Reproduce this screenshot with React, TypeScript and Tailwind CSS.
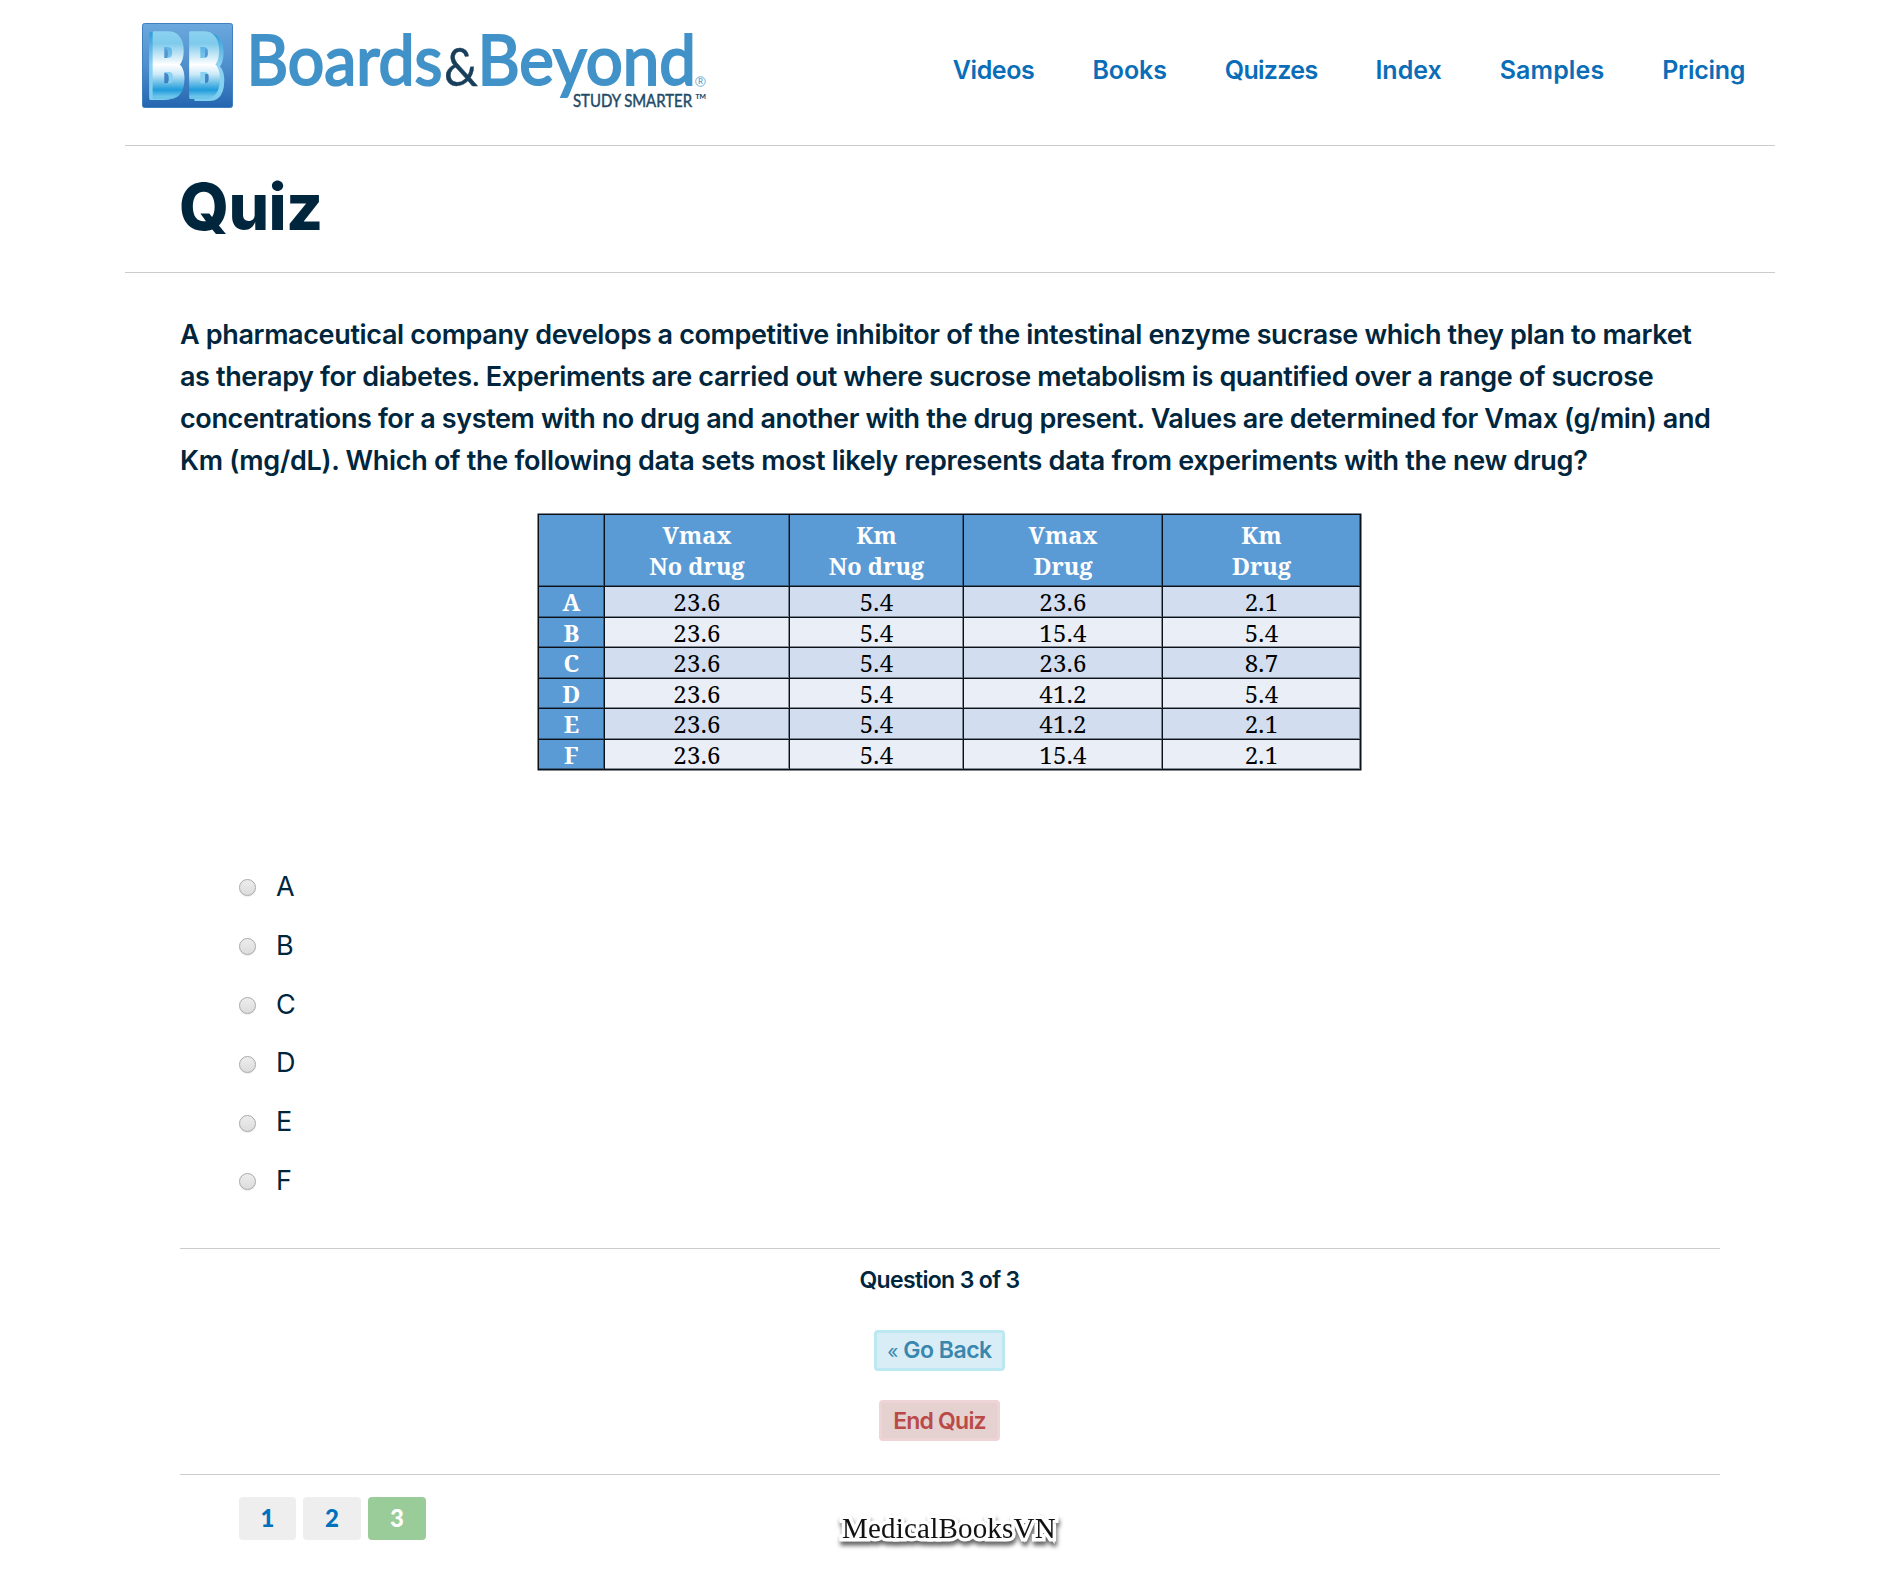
const NAV = [
  { label: "Videos", cls: "tracking-[-0.4px]" },
  { label: "Books", cls: "tracking-[-0.1px]" },
  { label: "Quizzes", cls: "tracking-[-0.7px]" },
  { label: "Index", cls: "tracking-[0px]" },
  { label: "Samples", cls: "tracking-[0.1px]" },
  { label: "Pricing", cls: "tracking-[-0.3px]" },
];

const QUESTION = [
  { text: "A pharmaceutical company develops a competitive inhibitor of the intestinal enzyme sucrase which they plan to market", cls: "tracking-[-0.36px]" },
  { text: "as therapy for diabetes. Experiments are carried out where sucrose metabolism is quantified over a range of sucrose", cls: "tracking-[-0.38px]" },
  { text: "concentrations for a system with no drug and another with the drug present. Values are determined for Vmax (g/min) and", cls: "tracking-[-0.38px]" },
  { text: "Km (mg/dL). Which of the following data sets most likely represents data from experiments with the new drug?", cls: "tracking-[-0.29px]" },
];

const HEAD = [
  ["Vmax", "No drug"],
  ["Km", "No drug"],
  ["Vmax", "Drug"],
  ["Km", "Drug"],
];

const ROWS = [
  ["A", "23.6", "5.4", "23.6", "2.1"],
  ["B", "23.6", "5.4", "15.4", "5.4"],
  ["C", "23.6", "5.4", "23.6", "8.7"],
  ["D", "23.6", "5.4", "41.2", "5.4"],
  ["E", "23.6", "5.4", "41.2", "2.1"],
  ["F", "23.6", "5.4", "15.4", "2.1"],
];

function Logo() {
  return (
    <svg width="572" height="96" viewBox="140 20 572 96" className="block" role="img" aria-label="Boards & Beyond">
      <defs>
        <linearGradient id="tile" x1="0" y1="0" x2="0" y2="1">
          <stop offset="0" stopColor="#6ba8dd" />
          <stop offset="0.5" stopColor="#4f8fcd" />
          <stop offset="1" stopColor="#2465b0" />
        </linearGradient>
        <linearGradient id="face" gradientUnits="userSpaceOnUse" x1="0" y1="-66" x2="0" y2="0">
          <stop offset="0" stopColor="#8bd3ef" />
          <stop offset="0.2" stopColor="#7fcaec" />
          <stop offset="0.52" stopColor="#ffffff" />
          <stop offset="0.66" stopColor="#cdeaf8" />
          <stop offset="0.9" stopColor="#1f9cdb" />
          <stop offset="1" stopColor="#6cc4ea" />
        </linearGradient>
        <linearGradient id="side" gradientUnits="userSpaceOnUse" x1="0" y1="-66" x2="0" y2="0">
          <stop offset="0" stopColor="#2c9bd8" />
          <stop offset="0.5" stopColor="#8fd3f2" />
          <stop offset="1" stopColor="#7ccdf0" />
        </linearGradient>
      </defs>
      <rect x="142.5" y="23.5" width="90" height="84" rx="2" fill="url(#tile)" stroke="#3f7fc2" strokeWidth="1" />
      <g fontFamily="Roboto, sans-serif" fontWeight="900" fontSize="89" strokeLinejoin="round">
        <g fill="url(#side)" stroke="url(#side)" strokeWidth="4">
          <text transform="translate(147.5 97.5) scale(0.58 1)">B</text>
          <text transform="translate(192.5 98.5) scale(0.57 1)">B</text>
        </g>
        <g fill="url(#face)" stroke="url(#face)" strokeWidth="4">
          <text transform="translate(151 96.5) scale(0.6 1)">B</text>
          <text transform="translate(187.5 96.5) scale(0.58 1)">B</text>
        </g>
      </g>
      <g fontFamily="Lato, sans-serif">
        <g fill="#4092c8" stroke="#4092c8" strokeWidth="2.2" fontSize="69">
          <text x="246.5" y="85.2" textLength="196" lengthAdjust="spacingAndGlyphs">Boards</text>
          <text x="477.5" y="85.2" textLength="218.5" lengthAdjust="spacingAndGlyphs">Beyond</text>
        </g>
        <text x="444" y="86" fontSize="52" textLength="34" lengthAdjust="spacingAndGlyphs" fill="#173f5c" stroke="#173f5c" strokeWidth="0.4">&amp;</text>
        <text x="573" y="107.2" fontSize="18" textLength="119" lengthAdjust="spacingAndGlyphs" fill="#1f4a68" stroke="#1f4a68" strokeWidth="0.5">STUDY SMARTER</text>
        <text x="695" y="106" fontSize="17" textLength="12" lengthAdjust="spacingAndGlyphs" fill="#1f4a68">™</text>
        <circle cx="700.5" cy="81.5" r="4.8" fill="none" stroke="#6fb0d9" strokeWidth="1" />
        <text x="698" y="84.4" fontSize="8" fill="#4092c8">R</text>
      </g>
    </svg>
  );
}

function DataTable() {
  return (
    <div className="ml-[358px] mt-[32px] w-[823px] bg-[#0b1118] p-px font-['Noto_Serif','DejaVu_Serif_Condensed','DejaVu_Serif',serif] text-[24px] tracking-[0.3px] shadow-[0_0_0_0.5px_#0b1118]">
      <div className="grid grid-cols-[65px_184px_173px_198px_197px] gap-px text-center">
        <div className="bg-[#5b9bd5] shadow-[inset_-1px_-1px_0_rgba(11,17,24,0.45)]" />
        {HEAD.map(([a, b], i) => (
          <div key={i} className="h-[71px] bg-[#5b9bd5] pt-[5px] text-[23.5px] font-bold leading-[31px] tracking-[0px] text-white shadow-[inset_-1px_-1px_0_rgba(11,17,24,0.45)]">
            <div>{a}</div>
            <div>{b}</div>
          </div>
        ))}
        {ROWS.map((row, r) =>
          row.map((cell, c) => (
            <div
              key={`${r}-${c}`}
              className={
                (r % 2 ? "h-[29px] " : "h-[30px] ") +
                "leading-[30px] shadow-[inset_-1px_-1px_0_rgba(11,17,24,0.45)] " +
                (c === 0
                  ? "bg-[#5b9bd5] text-[23.5px] font-bold text-white"
                  : r % 2
                    ? "bg-[#e9eef7] text-black"
                    : "bg-[#d2deef] text-black")
              }
            >
              {cell}
            </div>
          )),
        )}
      </div>
    </div>
  );
}

export default function App() {
  return (
    <div className="relative h-[1577px] w-[1899px] overflow-hidden bg-white font-[Inter,sans-serif] text-[#00263e]">
      <div className="ml-[125px] w-[1650px]">
        <header className="flex h-[146px] items-start border-b border-[#cccccc]">
          <div className="ml-[15px] mt-[20px]">
            <Logo />
          </div>
          <nav className="ml-auto mr-[30px] mt-[55px] flex gap-[58px] text-[25px] font-semibold leading-[30px] text-[#0a6db7]">
            {NAV.map((n) => (
              <a key={n.label} className={n.cls}>
                {n.label}
              </a>
            ))}
          </nav>
        </header>
        <div className="h-[127px] border-b border-[#cccccc] pl-[54px] pt-[29px]">
          <h1 className="text-[64px] font-extrabold leading-[64px] tracking-[-0.6px]">Quiz</h1>
        </div>
      </div>

      <main className="ml-[180px] w-[1540px] pt-[41px]">
        <div className="whitespace-nowrap text-[27px] font-semibold leading-[42px]">
          {QUESTION.map((l) => (
            <p key={l.text} className={l.cls}>
              {l.text}
            </p>
          ))}
        </div>

        <DataTable />

        <div className="ml-[59px] mt-[87px] h-[353px]">
          {["A", "B", "C", "D", "E", "F"].map((o) => (
            <label key={o} className="flex h-[58.8px] items-center text-[27px] font-[370] leading-[58px]">
              <input
                type="radio"
                name="answer"
                className="mt-[3px] h-[17px] w-[17px] appearance-none rounded-full border border-[#a8a8a8] bg-linear-to-b from-[#ededed] to-[#dcdcdc] shadow-[0_1px_1px_rgba(0,0,0,0.08)]"
              />
              <span className="ml-[20px] pt-px">{o}</span>
            </label>
          ))}
        </div>

        <section className="mt-[38px] flex flex-col items-center border-y border-[#cccccc] pb-[33px] pr-[21px] pt-[16px] text-[23px] font-semibold">
          <div className="leading-[30px] tracking-[-0.65px]">Question 3 of 3</div>
          <button className="mt-[35px] h-[41px] w-[131px] rounded-[4px] border-3 border-[#bce8f1] bg-[#d9edf7] leading-[30px] tracking-[-0.5px] text-[#3a87ad]">
            <span className="font-normal text-[19px]">«</span> Go Back
          </button>
          <button className="mt-[29px] h-[41px] w-[121px] rounded-[4px] border-3 border-[#eed3d7] bg-[#e6d1d1] leading-[30px] tracking-[-0.8px] text-[#b94a48]">
            End Quiz
          </button>
        </section>

        <div className="ml-[59px] mt-[22px] flex gap-[7px] text-center font-[Lato,sans-serif] text-[24px] font-black leading-[41px] text-[#0071bc]">
          <a className="h-[43px] w-[57px] rounded-[4px] bg-[#eeeeee]">1</a>
          <a className="h-[43px] w-[58px] rounded-[4px] bg-[#eeeeee]">2</a>
          <a className="h-[43px] w-[58px] rounded-[4px] bg-[#99cc99] text-white">3</a>
        </div>
      </main>

      <div className="absolute left-[842px] top-[1508px] whitespace-nowrap font-[Palatino,'Liberation_Serif',serif] text-[29px] leading-[40px] tracking-[0.2px] text-[#111111] [-webkit-text-stroke:7px_white] [filter:drop-shadow(1px_4px_2px_rgba(0,0,0,0.6))] [paint-order:stroke_fill]">
        MedicalBooksVN
      </div>
    </div>
  );
}
